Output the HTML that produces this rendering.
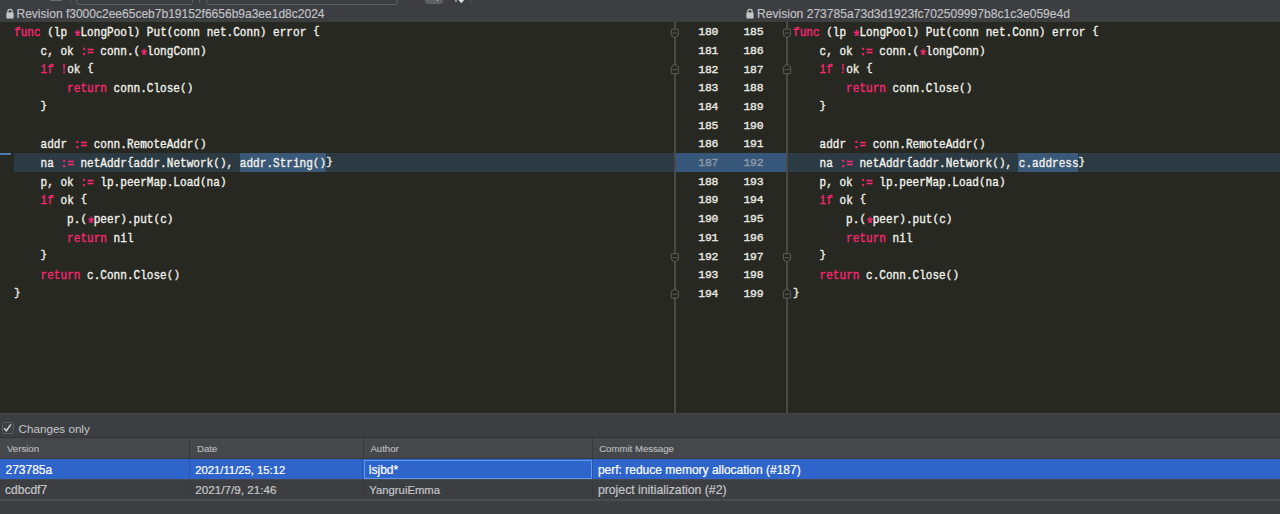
<!DOCTYPE html>
<html><head><meta charset="utf-8">
<style>
html,body{margin:0;padding:0;}
body{width:1280px;height:514px;overflow:hidden;position:relative;background:#3c3e42;font-family:"Liberation Sans",sans-serif;}
.abs{position:absolute;}
.ln{position:absolute;white-space:pre;font-family:"Liberation Mono",monospace;font-size:12.5px;letter-spacing:0;line-height:18.71px;height:18.71px;color:#f2f2ec;transform:scaleX(0.88517);transform-origin:0 0;}
.ln b{font-weight:normal;color:#f92672;}
.p,.br{font-style:normal;display:inline-block;}
.p{transform:translateY(-0.2px) scaleY(0.8);}
.br{transform:translateY(-1.5px) scaleY(0.85);}
.st{display:inline-block;transform:translateY(5.2px) scale(1.25);}
.ln,.num{-webkit-text-stroke:0.35px currentColor;}
.num{position:absolute;white-space:pre;font-family:"Liberation Mono",monospace;font-size:11.4px;letter-spacing:-0.2px;line-height:18.71px;color:#e6e6e0;}
.num.hl{color:#8d9aa6;}
.num{-webkit-text-stroke:0.4px currentColor;}
.hdr{position:absolute;top:0;height:22px;font-size:12px;color:#c2c3c5;line-height:22px;white-space:pre;-webkit-text-stroke:0.15px currentColor;}
.sel{background:#3a5878;}
.th{position:absolute;top:439px;height:20px;font-size:9.6px;color:#b9babc;line-height:20px;white-space:pre;-webkit-text-stroke:0.15px currentColor;}
.td{position:absolute;height:20px;font-size:12px;line-height:20px;white-space:pre;-webkit-text-stroke:0.2px currentColor;}
</style></head><body>
<!-- top strip -->
<div class="abs" style="left:50px;top:0;width:12px;height:1px;background:#6a6d71"></div>
<div class="abs" style="left:70px;top:0;width:1px;height:3px;background:#55585c"></div>
<div class="abs" style="left:76px;top:-10px;width:115px;height:12.5px;border:1px solid #5d6064;border-radius:3px"></div>
<div class="abs" style="left:199px;top:0;width:1px;height:3px;background:#55585c"></div>
<div class="abs" style="left:206px;top:-10px;width:190px;height:12.5px;border:1px solid #5d6064;border-radius:3px"></div>
<div class="abs" style="left:425px;top:-6px;width:18px;height:10px;background:#5c6164;border-radius:3px"></div>
<div class="abs" style="left:437px;top:0;width:1.2px;height:1px;background:#c8c8c8"></div>
<div class="abs" style="left:455px;top:0;width:1.5px;height:1.5px;background:#8a8c8e"></div>
<div class="abs" style="left:458px;top:-0.5px;width:6.6px;height:3.8px;background:#e0e0e0;clip-path:polygon(0 0,100% 0,50% 100%)"></div>
<div class="abs" style="left:470px;top:0;width:1px;height:3px;background:#55585c"></div>

<!-- headers -->
<svg class="abs" style="left:5.6px;top:7.7px" width="8" height="11" viewBox="0 0 8 11"><path d="M1.9,5 V3.4 A2.1,2.1 0 0 1 6.1,3.4 V5" fill="none" stroke="#c6c6c6" stroke-width="1.3"/><rect x="0.4" y="4.4" width="7.2" height="6" rx="0.7" fill="#c6c6c6"/></svg>
<div class="hdr" style="left:16.5px;top:3px;font-size:12.02px">Revision f3000c2ee65ceb7b19152f6656b9a3ee1d8c2024</div>
<svg class="abs" style="left:745.8px;top:7.7px" width="8" height="11" viewBox="0 0 8 11"><path d="M1.9,5 V3.4 A2.1,2.1 0 0 1 6.1,3.4 V5" fill="none" stroke="#c6c6c6" stroke-width="1.3"/><rect x="0.4" y="4.4" width="7.2" height="6" rx="0.7" fill="#c6c6c6"/></svg>
<div class="hdr" style="left:757px;top:3px;font-size:12.08px">Revision 273785a73d3d1923fc702509997b8c1c3e059e4d</div>

<!-- editor -->
<div class="abs" style="left:0;top:22px;width:1280px;height:391px;background:#272822"></div>
<div class="abs" style="left:14.4px;top:153.07px;width:659.6px;height:18.71px;background:#2c3a43"></div>
<div class="abs" style="left:675.5px;top:153.07px;width:111.5px;height:18.71px;background:#365779"></div>
<div class="abs" style="left:788px;top:153.07px;width:492px;height:18.71px;background:#2c3a43"></div>
<div class="abs" style="left:0;top:153px;width:11px;height:2px;background:#4a7ab0"></div>
<div class="abs sel" style="left:240px;top:153.07px;width:86.3px;height:18.71px"></div>
<div class="abs sel" style="left:1017.9px;top:153.07px;width:59.8px;height:18.71px"></div>
<div class="abs" style="left:674.1px;top:22px;width:1.6px;height:391px;background:#4a4a45"></div>
<div class="abs" style="left:786.2px;top:22px;width:1.6px;height:391px;background:#4a4a45"></div>
<svg class="abs" style="left:0;top:0" width="1280" height="514"><path d="M671.30,30.26 Q671.30,29.06 672.50,29.06 H677.30 Q678.50,29.06 678.50,30.26 V34.66 L674.90,38.05 L671.30,34.66 Z" fill="#272822" stroke="#56564f" stroke-width="1.15"/><line x1="672.50" y1="33.05" x2="677.30" y2="33.05" stroke="#56564f" stroke-width="1.15"/><path d="M671.30,72.38 Q671.30,73.58 672.50,73.58 H677.30 Q678.50,73.58 678.50,72.38 V67.38 L674.90,63.88 L671.30,67.38 Z" fill="#272822" stroke="#56564f" stroke-width="1.15"/><line x1="672.50" y1="69.62" x2="677.30" y2="69.62" stroke="#56564f" stroke-width="1.15"/><path d="M671.30,254.77 Q671.30,253.57 672.50,253.57 H677.30 Q678.50,253.57 678.50,254.77 V259.18 L674.90,262.57 L671.30,259.18 Z" fill="#272822" stroke="#56564f" stroke-width="1.15"/><line x1="672.50" y1="257.57" x2="677.30" y2="257.57" stroke="#56564f" stroke-width="1.15"/><path d="M671.30,296.90 Q671.30,298.10 672.50,298.10 H677.30 Q678.50,298.10 678.50,296.90 V291.90 L674.90,288.40 L671.30,291.90 Z" fill="#272822" stroke="#56564f" stroke-width="1.15"/><line x1="672.50" y1="294.15" x2="677.30" y2="294.15" stroke="#56564f" stroke-width="1.15"/><path d="M783.40,30.26 Q783.40,29.06 784.60,29.06 H789.40 Q790.60,29.06 790.60,30.26 V34.66 L787.00,38.05 L783.40,34.66 Z" fill="#272822" stroke="#56564f" stroke-width="1.15"/><line x1="784.60" y1="33.05" x2="789.40" y2="33.05" stroke="#56564f" stroke-width="1.15"/><path d="M783.40,72.38 Q783.40,73.58 784.60,73.58 H789.40 Q790.60,73.58 790.60,72.38 V67.38 L787.00,63.88 L783.40,67.38 Z" fill="#272822" stroke="#56564f" stroke-width="1.15"/><line x1="784.60" y1="69.62" x2="789.40" y2="69.62" stroke="#56564f" stroke-width="1.15"/><path d="M783.40,254.77 Q783.40,253.57 784.60,253.57 H789.40 Q790.60,253.57 790.60,254.77 V259.18 L787.00,262.57 L783.40,259.18 Z" fill="#272822" stroke="#56564f" stroke-width="1.15"/><line x1="784.60" y1="257.57" x2="789.40" y2="257.57" stroke="#56564f" stroke-width="1.15"/><path d="M783.40,296.90 Q783.40,298.10 784.60,298.10 H789.40 Q790.60,298.10 790.60,296.90 V291.90 L787.00,288.40 L783.40,291.90 Z" fill="#272822" stroke="#56564f" stroke-width="1.15"/><line x1="784.60" y1="294.15" x2="789.40" y2="294.15" stroke="#56564f" stroke-width="1.15"/></svg>
<div class="ln" style="top:23.90px;left:14.4px"><b>func</b> <i class="p">(</i>lp <b class="st">*</b>LongPool<i class="p">)</i> Put<i class="p">(</i>conn net.Conn<i class="p">)</i> error <i class="br">{</i></div>
<div class="ln" style="top:42.61px;left:14.4px">    c, ok <b>:=</b> conn.<i class="p">(</i><b class="st">*</b>longConn<i class="p">)</i></div>
<div class="ln" style="top:61.32px;left:14.4px">    <b>if</b> <b>!</b>ok <i class="br">{</i></div>
<div class="ln" style="top:80.03px;left:14.4px">        <b>return</b> conn.Close<i class="p">(</i><i class="p">)</i></div>
<div class="ln" style="top:98.74px;left:14.4px">    <i class="br">}</i></div>
<div class="ln" style="top:117.45px;left:14.4px"></div>
<div class="ln" style="top:136.16px;left:14.4px">    addr <b>:=</b> conn.RemoteAddr<i class="p">(</i><i class="p">)</i></div>
<div class="ln" style="top:154.87px;left:14.4px">    na <b>:=</b> netAddr<i class="br">{</i>addr.Network<i class="p">(</i><i class="p">)</i>, addr.String<i class="p">(</i><i class="p">)</i><i class="br">}</i></div>
<div class="ln" style="top:173.58px;left:14.4px">    p, ok <b>:=</b> lp.peerMap.Load<i class="p">(</i>na<i class="p">)</i></div>
<div class="ln" style="top:192.29px;left:14.4px">    <b>if</b> ok <i class="br">{</i></div>
<div class="ln" style="top:211.00px;left:14.4px">        p.<i class="p">(</i><b class="st">*</b>peer<i class="p">)</i>.put<i class="p">(</i>c<i class="p">)</i></div>
<div class="ln" style="top:229.71px;left:14.4px">        <b>return</b> nil</div>
<div class="ln" style="top:248.42px;left:14.4px">    <i class="br">}</i></div>
<div class="ln" style="top:267.13px;left:14.4px">    <b>return</b> c.Conn.Close<i class="p">(</i><i class="p">)</i></div>
<div class="ln" style="top:285.84px;left:14.4px"><i class="br">}</i></div>
<div class="ln" style="top:23.90px;left:792.5px"><b>func</b> <i class="p">(</i>lp <b class="st">*</b>LongPool<i class="p">)</i> Put<i class="p">(</i>conn net.Conn<i class="p">)</i> error <i class="br">{</i></div>
<div class="ln" style="top:42.61px;left:792.5px">    c, ok <b>:=</b> conn.<i class="p">(</i><b class="st">*</b>longConn<i class="p">)</i></div>
<div class="ln" style="top:61.32px;left:792.5px">    <b>if</b> <b>!</b>ok <i class="br">{</i></div>
<div class="ln" style="top:80.03px;left:792.5px">        <b>return</b> conn.Close<i class="p">(</i><i class="p">)</i></div>
<div class="ln" style="top:98.74px;left:792.5px">    <i class="br">}</i></div>
<div class="ln" style="top:117.45px;left:792.5px"></div>
<div class="ln" style="top:136.16px;left:792.5px">    addr <b>:=</b> conn.RemoteAddr<i class="p">(</i><i class="p">)</i></div>
<div class="ln" style="top:154.87px;left:792.5px">    na <b>:=</b> netAddr<i class="br">{</i>addr.Network<i class="p">(</i><i class="p">)</i>, c.address<i class="br">}</i></div>
<div class="ln" style="top:173.58px;left:792.5px">    p, ok <b>:=</b> lp.peerMap.Load<i class="p">(</i>na<i class="p">)</i></div>
<div class="ln" style="top:192.29px;left:792.5px">    <b>if</b> ok <i class="br">{</i></div>
<div class="ln" style="top:211.00px;left:792.5px">        p.<i class="p">(</i><b class="st">*</b>peer<i class="p">)</i>.put<i class="p">(</i>c<i class="p">)</i></div>
<div class="ln" style="top:229.71px;left:792.5px">        <b>return</b> nil</div>
<div class="ln" style="top:248.42px;left:792.5px">    <i class="br">}</i></div>
<div class="ln" style="top:267.13px;left:792.5px">    <b>return</b> c.Conn.Close<i class="p">(</i><i class="p">)</i></div>
<div class="ln" style="top:285.84px;left:792.5px"><i class="br">}</i></div>
<div class="num" style="top:23.10px;left:698.3px">180</div>
<div class="num" style="top:41.81px;left:698.3px">181</div>
<div class="num" style="top:60.52px;left:698.3px">182</div>
<div class="num" style="top:79.23px;left:698.3px">183</div>
<div class="num" style="top:97.94px;left:698.3px">184</div>
<div class="num" style="top:116.65px;left:698.3px">185</div>
<div class="num" style="top:135.36px;left:698.3px">186</div>
<div class="num hl" style="top:154.07px;left:698.3px">187</div>
<div class="num" style="top:172.78px;left:698.3px">188</div>
<div class="num" style="top:191.49px;left:698.3px">189</div>
<div class="num" style="top:210.20px;left:698.3px">190</div>
<div class="num" style="top:228.91px;left:698.3px">191</div>
<div class="num" style="top:247.62px;left:698.3px">192</div>
<div class="num" style="top:266.33px;left:698.3px">193</div>
<div class="num" style="top:285.04px;left:698.3px">194</div>
<div class="num" style="top:23.10px;left:743.4px">185</div>
<div class="num" style="top:41.81px;left:743.4px">186</div>
<div class="num" style="top:60.52px;left:743.4px">187</div>
<div class="num" style="top:79.23px;left:743.4px">188</div>
<div class="num" style="top:97.94px;left:743.4px">189</div>
<div class="num" style="top:116.65px;left:743.4px">190</div>
<div class="num" style="top:135.36px;left:743.4px">191</div>
<div class="num hl" style="top:154.07px;left:743.4px">192</div>
<div class="num" style="top:172.78px;left:743.4px">193</div>
<div class="num" style="top:191.49px;left:743.4px">194</div>
<div class="num" style="top:210.20px;left:743.4px">195</div>
<div class="num" style="top:228.91px;left:743.4px">196</div>
<div class="num" style="top:247.62px;left:743.4px">197</div>
<div class="num" style="top:266.33px;left:743.4px">198</div>
<div class="num" style="top:285.04px;left:743.4px">199</div>

<!-- bottom panel -->
<div class="abs" style="left:0;top:413px;width:1280px;height:1px;background:#434549"></div>
<div class="abs" style="left:1.6px;top:422px;width:10.4px;height:10px;border:1px solid #5c5f62;border-radius:2.5px;background:#3b4044"></div>
<svg class="abs" style="left:2px;top:422px" width="12" height="12" viewBox="0 0 12 12"><path d="M2.1,6.3 L4.4,8.8 L8.9,2.4" fill="none" stroke="#cfcfcf" stroke-width="1.5"/></svg>
<div class="abs" style="left:18.6px;top:420px;font-size:11.65px;line-height:17px;color:#c6c7c9;white-space:pre">Changes only</div>

<div class="abs" style="left:0;top:437px;width:1280px;height:1px;background:#333538"></div>
<div class="abs" style="left:0;top:438px;width:1280px;height:20.5px;background:#45484b"></div>
<div class="abs" style="left:189px;top:438px;width:1px;height:61px;background:#36383b"></div>
<div class="abs" style="left:362.5px;top:438px;width:1px;height:61px;background:#36383b"></div>
<div class="abs" style="left:591.5px;top:438px;width:1px;height:61px;background:#36383b"></div>
<div class="th" style="left:7px">Version</div>
<div class="th" style="left:197px">Date</div>
<div class="th" style="left:370.4px">Author</div>
<div class="th" style="left:599.2px">Commit Message</div>

<div class="abs" style="left:0;top:459px;width:1280px;height:20px;background:#2f65ca"></div>
<div class="abs" style="left:189px;top:459px;width:1px;height:20px;background:#2a57ad"></div>
<div class="abs" style="left:362px;top:459px;width:1px;height:20px;background:#2a57ad"></div>
<div class="abs" style="left:591.5px;top:459px;width:1px;height:20px;background:#2a57ad"></div>
<div class="abs" style="left:0;top:458px;width:1280px;height:1px;background:#393b3e"></div>
<div class="abs" style="left:363.5px;top:459.5px;width:226px;height:17.5px;border:1px solid #5a9bf0"></div>
<div class="td" style="left:5.5px;top:460px;color:#ffffff">273785a</div>
<div class="td" style="left:195.3px;top:460px;color:#ffffff;font-size:11.25px">2021/11/25, 15:12</div>
<div class="td" style="left:368.8px;top:460px;color:#ffffff">lsjbd*</div>
<div class="td" style="left:597.9px;top:460px;color:#ffffff">perf: reduce memory allocation (#187)</div>

<div class="td" style="left:5.1px;top:480px;color:#c5c6c8">cdbcdf7</div>
<div class="td" style="left:195.3px;top:480px;color:#c5c6c8;font-size:11.7px">2021/7/9, 21:46</div>
<div class="td" style="left:369.3px;top:480px;color:#c5c6c8;font-size:11.3px">YangruiEmma</div>
<div class="td" style="left:597.9px;top:480px;color:#c5c6c8;font-size:12.25px">project initialization (#2)</div>
<div class="abs" style="left:0;top:499.2px;width:1280px;height:1.4px;background:#4a4c50"></div>
<div class="abs" style="left:0;top:479px;width:1280px;height:1px;background:#47494c"></div>
</body></html>
